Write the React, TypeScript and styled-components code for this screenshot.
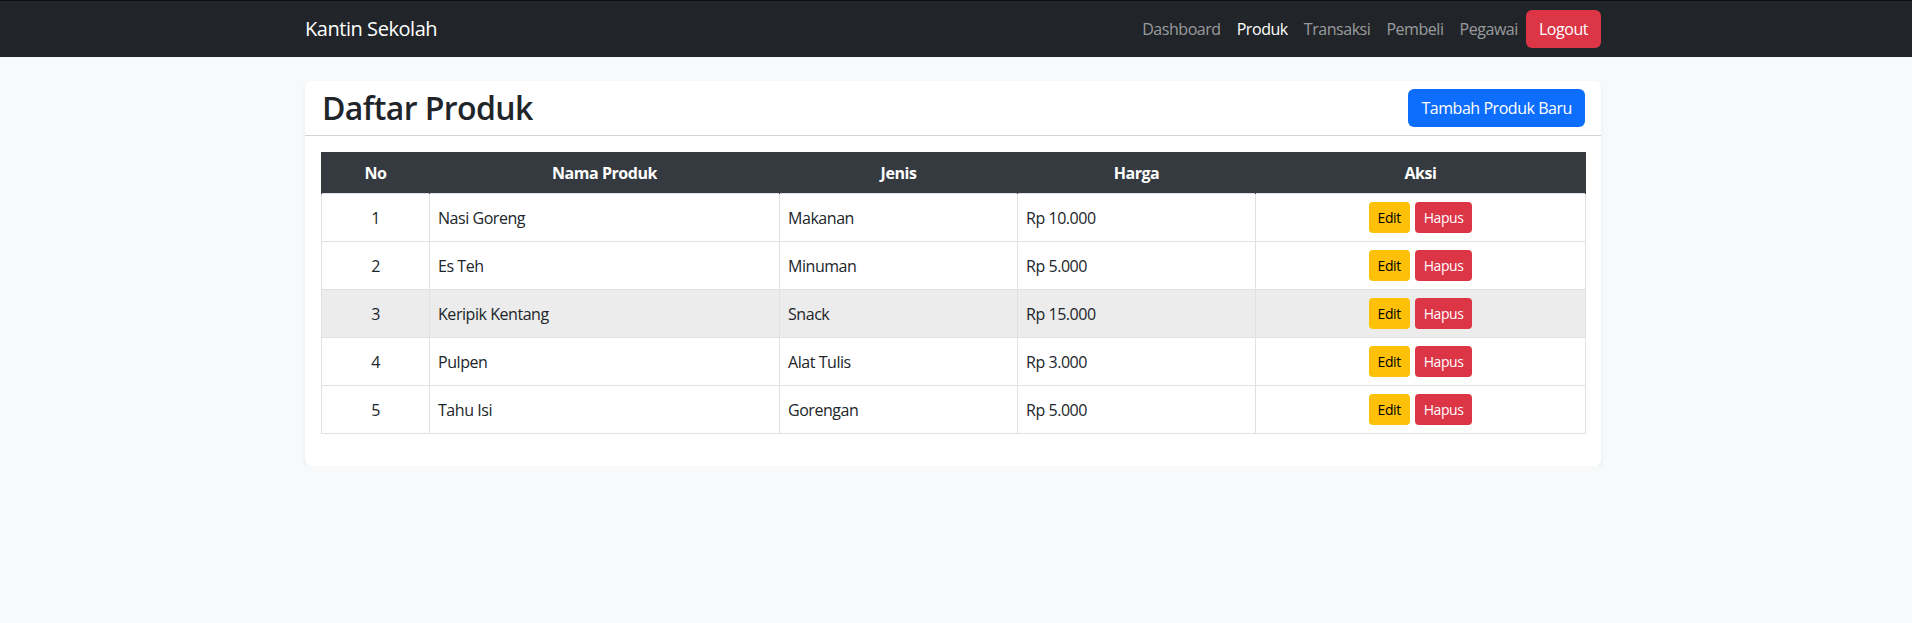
import * as React from 'react';
import styled, { createGlobalStyle } from 'styled-components';

const GlobalStyle = createGlobalStyle`
  * {
    box-sizing: border-box;
  }
  body {
    margin: 0;
    background: #f8f9fa;
    color: #212529;
    font-family: 'Segoe UI', 'Open Sans', 'Noto Sans', sans-serif;
    font-size: 16px;
    line-height: 1.5;
    letter-spacing: -0.45px;
  }
`;

const Navbar = styled.nav`
  background: #212529;
  border-top: 1px solid #0b0d17;
  height: 57px;
`;

const Container = styled.div`
  max-width: 1320px;
  margin: 0 auto;
  padding: 0 12px;
  height: 100%;
`;

const NavInner = styled(Container)`
  display: flex;
  align-items: center;
  justify-content: space-between;
`;

const Brand = styled.a`
  color: #fff;
  font-size: 20px;
  text-decoration: none;
  margin-left: -3px;
`;

const NavList = styled.div`
  display: flex;
  align-items: center;
  margin-right: 3px;
`;

const NavLink = styled.a<{ $active?: boolean }>`
  color: ${(p) => (p.$active ? '#fff' : 'rgba(255, 255, 255, 0.55)')};
  padding: 8px 8px;
  text-decoration: none;
`;

const Button = styled.button<{ $variant: 'primary' | 'danger' | 'warning'; $small?: boolean }>`
  font-family: inherit;
  letter-spacing: inherit;
  border: 1px solid transparent;
  border-radius: ${(p) => (p.$small ? '4px' : '6px')};
  font-size: ${(p) => (p.$small ? '14px' : '16px')};
  line-height: 1.5;
  padding: ${(p) => (p.$small ? '4px 8px' : '6px 12px')};
  cursor: pointer;
  background: ${(p) =>
    p.$variant === 'primary' ? '#0d6efd' : p.$variant === 'danger' ? '#dc3545' : '#ffc107'};
  color: ${(p) => (p.$variant === 'warning' ? '#000' : '#fff')};
`;

const Main = styled(Container)`
  padding-top: 24px;
`;

const Card = styled.div`
  background: #fff;
  border-radius: 6px;
  box-shadow: 0 2px 4px rgba(0, 0, 0, 0.075);
  margin-left: -3px;
  margin-right: 3px;
`;

const CardHeader = styled.div`
  display: flex;
  align-items: center;
  justify-content: space-between;
  padding: 8px 16px 8px 17px;
  border-bottom: 1px solid #d3d4d5;
`;

const Title = styled.h2`
  margin: 0;
  font-size: 32px;
  font-weight: 600;
  line-height: 1.2;
  letter-spacing: -0.6px;
`;

const CardBody = styled.div`
  padding: 16px;
`;

const Table = styled.table`
  width: 100%;
  border-collapse: collapse;
  margin-bottom: 16px;
  table-layout: fixed;
`;

const Th = styled.th<{ $w: number }>`
  width: ${(p) => p.$w}px;
  background: #343a40;
  color: #fff;
  font-weight: 700;
  text-align: center;
  padding: 8px;
  border: 1px solid #373b3e;
  border-bottom: none;
`;

const Row = styled.tr<{ $hover?: boolean }>`
  background: ${(p) => (p.$hover ? '#ececec' : '#fff')};
`;

const Td = styled.td<{ $center?: boolean }>`
  padding: 8px;
  border: 1px solid #dee2e6;
  text-align: ${(p) => (p.$center ? 'center' : 'left')};
  vertical-align: middle;
  height: 48px;
`;

const Actions = styled.div`
  display: flex;
  justify-content: center;
  gap: 5px;
`;

const produk = [
  { no: 1, nama: 'Nasi Goreng', jenis: 'Makanan', harga: 'Rp 10.000' },
  { no: 2, nama: 'Es Teh', jenis: 'Minuman', harga: 'Rp 5.000' },
  { no: 3, nama: 'Keripik Kentang', jenis: 'Snack', harga: 'Rp 15.000' },
  { no: 4, nama: 'Pulpen', jenis: 'Alat Tulis', harga: 'Rp 3.000' },
  { no: 5, nama: 'Tahu Isi', jenis: 'Gorengan', harga: 'Rp 5.000' },
];

const App = () => {
  return (
    <>
      <GlobalStyle />
      <Navbar>
        <NavInner>
          <Brand href="#">Kantin Sekolah</Brand>
          <NavList>
            <NavLink href="#">Dashboard</NavLink>
            <NavLink href="#" $active>
              Produk
            </NavLink>
            <NavLink href="#">Transaksi</NavLink>
            <NavLink href="#">Pembeli</NavLink>
            <NavLink href="#">Pegawai</NavLink>
            <Button $variant="danger">Logout</Button>
          </NavList>
        </NavInner>
      </Navbar>
      <Main>
        <Card>
          <CardHeader>
            <Title>Daftar Produk</Title>
            <Button $variant="primary">Tambah Produk Baru</Button>
          </CardHeader>
          <CardBody>
            <Table>
              <thead>
                <tr>
                  <Th $w={108}>No</Th>
                  <Th $w={350}>Nama Produk</Th>
                  <Th $w={238}>Jenis</Th>
                  <Th $w={238}>Harga</Th>
                  <Th $w={330}>Aksi</Th>
                </tr>
              </thead>
              <tbody>
                {produk.map((p) => (
                  <Row key={p.no} $hover={p.no === 3}>
                    <Td $center>{p.no}</Td>
                    <Td>{p.nama}</Td>
                    <Td>{p.jenis}</Td>
                    <Td>{p.harga}</Td>
                    <Td>
                      <Actions>
                        <Button $variant="warning" $small>
                          Edit
                        </Button>
                        <Button $variant="danger" $small>
                          Hapus
                        </Button>
                      </Actions>
                    </Td>
                  </Row>
                ))}
              </tbody>
            </Table>
          </CardBody>
        </Card>
      </Main>
    </>
  );
};

export default App;
